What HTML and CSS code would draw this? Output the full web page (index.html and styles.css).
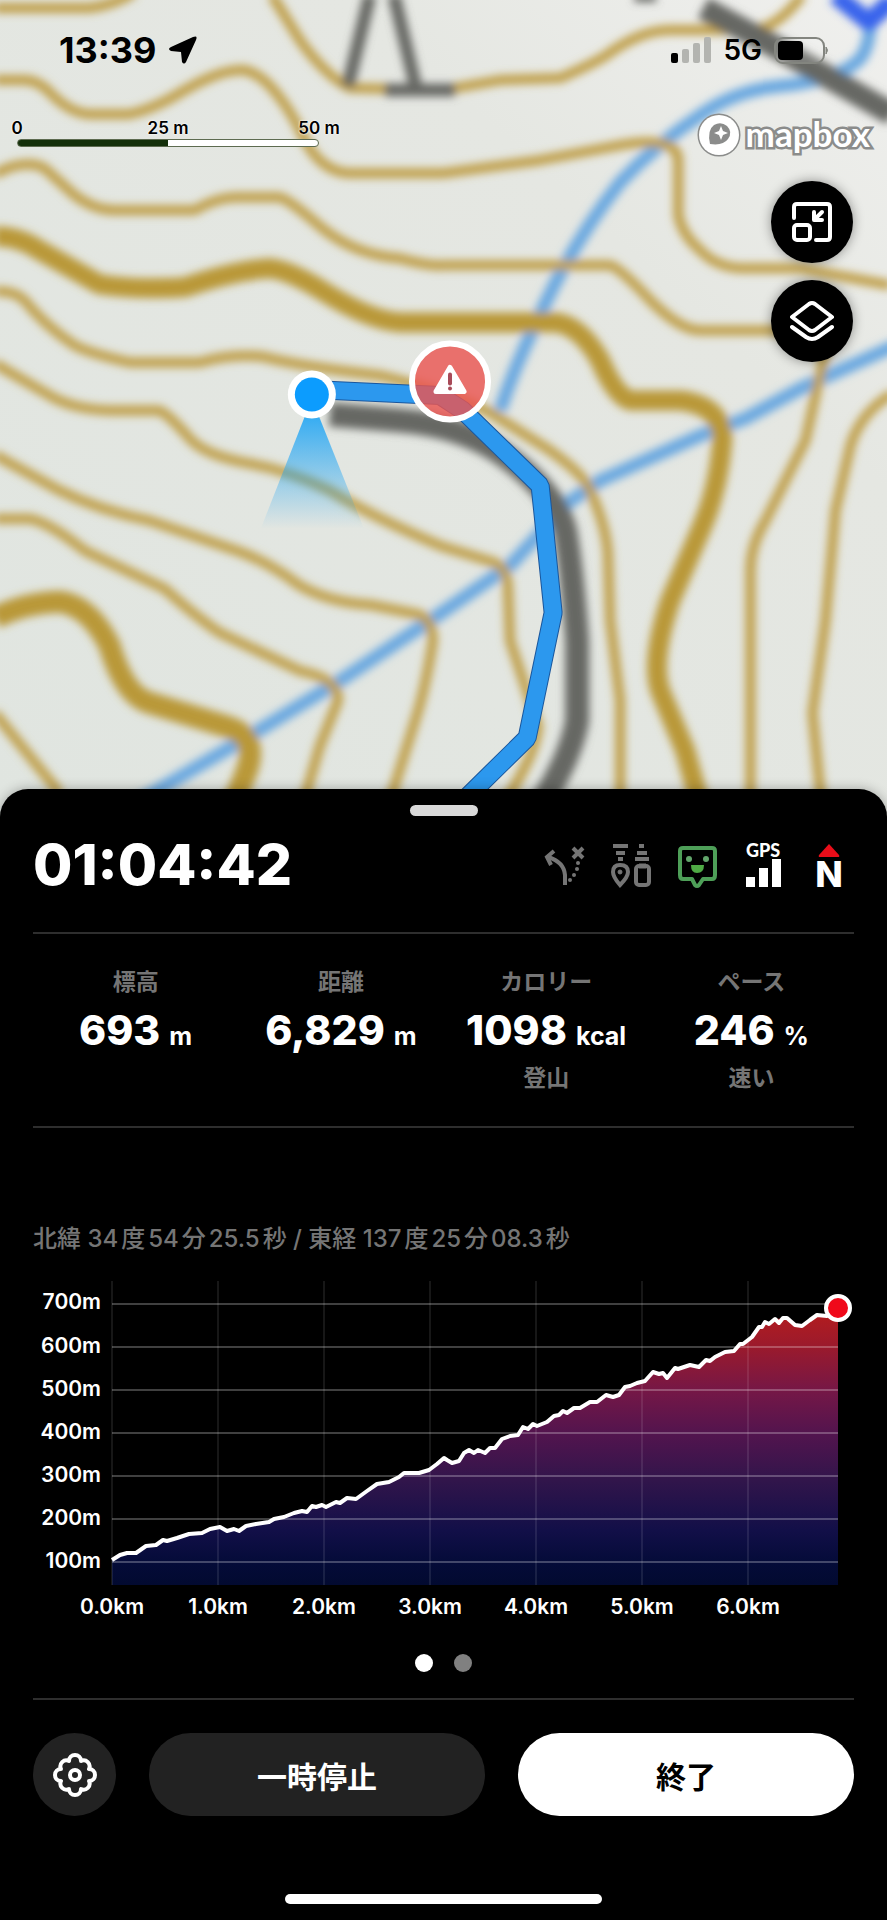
FILE: index.html
```html
<!DOCTYPE html>
<html lang="ja">
<head>
    <meta charset="UTF-8">
    <meta name="viewport" content="width=device-width, initial-scale=1.0">
    <title>活動記録</title>
    <link rel="stylesheet" href="styles.css">
</head>
<body>
    <main class="map">
        <svg class="map-canvas" viewBox="0 0 887 816" preserveAspectRatio="xMidYMin slice" aria-hidden="true">
            <defs>
                <filter id="soft" x="-5%" y="-5%" width="110%" height="110%">
                    <feGaussianBlur stdDeviation="4"/>
                </filter>
                <linearGradient id="cone" x1="0" y1="0" x2="0" y2="1">
                    <stop offset="0" stop-color="#1aa3f5"/>
                    <stop offset="1" stop-color="#1aa3f5" stop-opacity="0"/>
                </linearGradient>
                <linearGradient id="land" x1="0" y1="1" x2="1" y2="0">
                    <stop offset="0" stop-color="#e0e5e0"/>
                    <stop offset="0.7" stop-color="#e5e7e2"/>
                    <stop offset="1" stop-color="#f0f0ee"/>
                </linearGradient>
            </defs>
            <rect width="887" height="816" fill="url(#land)"/>

            <g filter="url(#soft)" fill="none" stroke-linejoin="round">
                <!-- streams -->
                <g stroke="#6aa8e0" stroke-width="13">
                    <path d="M500 410 Q515 365 535 325 Q570 245 620 182 Q655 145 700 115 Q735 90 780 86 Q840 80 860 58 Q870 45 870 15"/>
                    <path d="M120 812 L160 788 L250 735 L340 680 L430 620 L510 565 L568 502 L600 480 L700 435 L745 418 L800 388 L895 345"/>
                </g>
                <path d="M835 -5 L868 22 L892 0" stroke="#3763ec" stroke-width="18"/>
                <!-- contours -->
                <g stroke="#bf9f48" stroke-width="10">
                    <path d="M-5 8 H90 Q115 5 135 -8"/>
                    <path d="M-5 80 H25 Q38 80 50 92 Q70 113 90 114 H130 Q150 110 175 96 Q220 68 245 70 Q262 74 278 95 Q292 112 305 140 Q322 172 350 173 H443 L540 160 L620 145 Q677 135 678 160 V215 Q682 235 700 250 Q715 266 740 268 H800 L890 285"/>
                    <path d="M272 -5 L300 40 Q325 75 350 88 L443 90 L500 80 L560 78 Q590 65 605 56 Q640 30 670 30 H750 Q775 30 802 -5"/>
                    <path d="M-5 174 Q25 158 45 168 L75 195 Q95 210 115 210 H195 Q215 198 235 197 H280 Q290 200 320 226 Q355 255 400 258 Q430 266 443 265 H610 Q620 268 650 300 Q680 330 700 330 H840"/>
                    <path d="M-5 291 Q15 290 25 300 Q45 325 75 345 Q90 353 130 362 H200 Q230 353 262 356 Q300 366 380 375 Q450 392 490 412 L550 450 Q585 475 590 490 Q608 530 608 560 L610 620 L620 700 V812"/>
                    <path d="M-5 363 L45 392 Q70 409 110 410 H160 Q170 415 190 438 Q205 455 250 463 Q290 470 330 490 Q370 515 440 545 L495 562 Q508 568 508 590 L510 640 Q530 700 538 725 Q535 755 505 800"/>
                    <path d="M-5 454 L60 490 Q100 510 150 520 L240 551 Q270 562 300 585 Q330 602 370 604 L415 613 Q432 615 433 640 Q425 690 415 720 L390 800"/>
                    <path d="M-5 518 H30 Q50 522 85 550 L165 588 Q195 615 220 632 L300 670 Q340 678 338 700 L320 745 L304 800"/>
                    <path d="M-5 712 L60 792"/>
                    <path d="M825 350 L805 440 L765 520 Q750 545 750 570 V812"/>
                    <path d="M892 393 Q860 412 850 445 L835 510 L825 620 L812 712 L822 812"/>
                </g>
                <g stroke="#b99838" stroke-width="20">
                    <path d="M-5 236 Q20 236 40 250 L100 284 Q140 290 185 287 Q235 270 270 268 Q290 270 325 292 Q370 320 400 322 H555 Q580 325 600 360 Q615 395 630 400 H680 Q722 405 722 440 Q718 490 700 530 L670 600 Q650 660 660 690 L685 750 L702 812"/>
                    <path d="M-5 617 Q25 602 60 601 Q90 605 110 645 Q125 695 150 702 L225 725 Q262 735 245 775 L232 806" stroke-width="22"/>
                </g>
                <!-- roads -->
                <g stroke="#666763" stroke-width="24">
                    <path d="M330 414 L400 420 Q460 425 500 452 Q555 490 565 530 Q572 570 577 640 V720 Q570 760 535 812"/>
                    <path d="M703 8 L770 44 L892 114" stroke-width="23"/>
                    <path d="M370 -5 L348 86 M394 -5 L416 88 M385 90 H455" stroke-width="13"/>
                    <path d="M634 -2 H656" stroke-width="8"/>
                </g>
            </g>

            <path d="M312 398 L261 528 H364 Z" fill="url(#cone)"/>
            <path d="M312 389 L440 395 L463 410 L540 485 L553 612 L527 737 L466 797" fill="none" stroke="#1a569c" stroke-width="19" stroke-linejoin="bevel"/>
            <path d="M312 389 L440 395 L463 410 L540 485 L553 612 L527 737 L466 797" fill="none" stroke="#2c98ee" stroke-width="17" stroke-linejoin="bevel"/>
            <circle cx="312" cy="394" r="24" fill="#fff"/>
            <circle cx="312" cy="394" r="17" fill="#0c9cfe"/>

            <circle cx="450" cy="381" r="38" fill="#ea5552" fill-opacity="0.82" stroke="#fff" stroke-width="6"/>
            <path d="M450 367 L464 391 H436 Z" fill="#fff" stroke="#fff" stroke-width="5" stroke-linejoin="round"/>
            <path d="M450 374 V383" stroke="#a84a58" stroke-width="4" stroke-linecap="round"/>
            <circle cx="450" cy="388" r="2" fill="#a84a58"/>
        </svg>

        <header class="status-bar">
            <div class="status-time">
                <span>13:39</span>
                <svg width="30" height="30" viewBox="0 0 30 30" aria-hidden="true">
                    <path d="M3 12 L25 2 Q30 0 28 5 L18 27 Q16 30 14 27 L13 17 L3 16 Q-1 14 3 12 Z" fill="#000"/>
                </svg>
            </div>
            <div class="status-signal">
                <svg width="40" height="27" viewBox="0 0 40 27" aria-hidden="true">
                    <rect x="0" y="16" width="7" height="10" rx="2" fill="#000"/>
                    <g fill="#b3b4b0">
                        <rect x="11" y="12" width="7" height="14" rx="2"/>
                        <rect x="22" y="6" width="7" height="20" rx="2"/>
                        <rect x="33" y="0" width="7" height="26" rx="2"/>
                    </g>
                </svg>
                <span>5G</span>
                <svg width="56" height="27" viewBox="0 0 56 27" aria-hidden="true">
                    <rect x="1" y="1" width="49" height="25" rx="8" fill="#fff" fill-opacity="0.15" stroke="#83857f" stroke-width="2"/>
                    <rect x="4" y="4" width="25" height="19" rx="4" fill="#000"/>
                    <path d="M52 10 Q55 13 52 17 Z" fill="#83857f" stroke="#83857f"/>
                </svg>
            </div>
        </header>

        <div class="map-tools">
            <div class="scale">
                <div class="scale-labels">
                    <span>0</span>
                    <span>25 m</span>
                    <span>50 m</span>
                </div>
                <div class="scale-bar"></div>
            </div>
            <div class="map-actions">
                <a class="mapbox" href="#">
                    <svg width="44" height="44" viewBox="0 0 44 44" aria-hidden="true">
                        <circle cx="22" cy="22" r="20" fill="#fff" stroke="#8b8c8b" stroke-width="3"/>
                        <path d="M13 31 Q10 17 17 12 Q24 8 30 13 Q36 19 31 26 Q26 33 13 31 Z" fill="#8b8c8b"/>
                        <path d="M24 13 L26 18 L31 20 L26 22 L24 27 L22 22 L17 20 L22 18 Z" fill="#fff"/>
                    </svg>
                    <span>mapbox</span>
                </a>
                <button class="round-button" type="button" aria-label="縮小表示">
                    <svg width="42" height="42" viewBox="0 0 42 42" fill="none" stroke="#fff" stroke-width="4" stroke-linecap="round" stroke-linejoin="round" aria-hidden="true">
                        <path d="M3 17 V6 Q3 3 6 3 H36 Q39 3 39 6 V36 Q39 39 36 39 H25"/>
                        <rect x="3" y="24" width="16" height="15" rx="3"/>
                        <path d="M31 11 L24 18 M23 11 V19 H31"/>
                    </svg>
                </button>
                <button class="round-button" type="button" aria-label="レイヤー">
                    <svg width="46" height="42" viewBox="0 0 46 42" fill="none" stroke="#fff" stroke-width="4" stroke-linecap="round" stroke-linejoin="round" aria-hidden="true">
                        <path d="M20 4 Q23 2 26 4 L43 17 L26 30 Q23 32 20 30 L3 17 Z"/>
                        <path d="M3 27 L17 37 Q23 41 29 37 L43 27"/>
                    </svg>
                </button>
            </div>
        </div>
    </main>

    <section class="sheet">
        <div class="handle"></div>

        <div class="timer-row">
            <div class="timer">01:04:42</div>
            <div class="indicators">
                <svg viewBox="0 0 44 44" fill="none" stroke="#757575" stroke-width="4" aria-hidden="true">
                    <path d="M22 42 V32 Q21 19 5 14"/>
                    <path d="M11 8 L4 14 L8 22" />
                    <path d="M30 5 L40 15 M40 5 L30 15"/>
                    <g fill="#757575" stroke="none">
                        <circle cx="35" cy="20" r="2"/>
                        <circle cx="34" cy="26" r="2"/>
                        <circle cx="31" cy="32" r="2"/>
                        <circle cx="27" cy="37" r="2"/>
                    </g>
                </svg>
                <svg viewBox="0 0 44 44" fill="none" stroke="#757575" stroke-width="4" aria-hidden="true">
                    <path d="M4 3 H19 M7 10 H16 M9 16 H14 M30 3 H35 M28 10 H38 M26 16 H40"/>
                    <path d="M11 42 Q4 34 4 29 Q4 22 11 22 Q19 22 19 29 Q19 34 11 42 Z"/>
                    <circle cx="11" cy="29" r="2" fill="#757575" stroke-width="1"/>
                    <rect x="27" y="23" width="13" height="19" rx="3"/>
                    <path d="M30 23 H37" stroke-width="5"/>
                </svg>
                <svg viewBox="0 0 44 44" aria-hidden="true">
                    <path d="M8 5 H37 Q40 5 40 8 V32 Q40 36 37 36 H28 L24 42 Q22 44 20 42 L17 36 H8 Q5 36 5 32 V8 Q5 5 8 5 Z" fill="none" stroke="#4e9f58" stroke-width="4" stroke-linejoin="round"/>
                    <circle cx="14" cy="16" r="3" fill="#62a66b"/>
                    <circle cx="31" cy="16" r="3" fill="#62a66b"/>
                    <path d="M16 22 H29 Q29 30 22 30 Q16 30 16 22 Z" fill="#4fab45"/>
                </svg>
                <svg viewBox="0 0 44 44" fill="#fff" aria-hidden="true">
                    <text class="gps-text" x="22" y="14" text-anchor="middle">GPS</text>
                    <rect x="5" y="34" width="9" height="10"/>
                    <rect x="18" y="25" width="9" height="19"/>
                    <rect x="31" y="16" width="9" height="28"/>
                </svg>
                <svg viewBox="0 0 44 44" aria-hidden="true">
                    <path d="M22 1 L32 12 Q33 14 31 14 H13 Q11 14 12 12 Z" fill="#ea0d19"/>
                    <text class="north-text" x="22" y="44" text-anchor="middle">N</text>
                </svg>
            </div>
        </div>

        <dl class="stats">
            <div class="stat">
                <dt>標高</dt>
                <dd class="value">693<small>m</small></dd>
            </div>
            <div class="stat">
                <dt>距離</dt>
                <dd class="value">6,829<small>m</small></dd>
            </div>
            <div class="stat">
                <dt>カロリー</dt>
                <dd class="value">1098<small>kcal</small></dd>
                <dd class="note">登山</dd>
            </div>
            <div class="stat">
                <dt>ペース</dt>
                <dd class="value">246<small>%</small></dd>
                <dd class="note">速い</dd>
            </div>
        </dl>

        <p class="coords">北緯 34度54分25.5秒 / 東経 137度25分08.3秒</p>

        <svg class="chart" viewBox="0 0 821 344" role="img" aria-label="標高グラフ">
            <defs>
                <linearGradient id="elevation" gradientUnits="userSpaceOnUse" x1="0" y1="30" x2="0" y2="304">
                    <stop offset="0" stop-color="#b41c1e"/>
                    <stop offset="0.12" stop-color="#9d1a2b"/>
                    <stop offset="0.3" stop-color="#731747"/>
                    <stop offset="0.45" stop-color="#52144e"/>
                    <stop offset="0.62" stop-color="#31154b"/>
                    <stop offset="0.8" stop-color="#120f48"/>
                    <stop offset="0.92" stop-color="#040b38"/>
                    <stop offset="1" stop-color="#020a30"/>
                </linearGradient>
            </defs>
            <g transform="translate(79 4)">
                <path fill="url(#elevation)" d="M0 279 L8 274 L15 272 L24 272 L34 265 L44 264 L51 259 L55 260 L77 253 L90 252 L98 248 L108 246 L115 250 L122 248 L127 250 L134 245 L157 241 L172 236 L190 230 L195 231 L200 225 L214 226 L224 221 L235 217 L244 218 L255 210 L265 203 L277 201 L292 192 L307 192 L317 189 L332 177 L340 182 L347 180 L357 169 L373 172 L378 167 L383 167 L390 158 L406 154 L411 146 L425 145 L435 141 L451 130 L468 127 L478 121 L485 121 L494 114 L507 114 L513 106 L533 100 L541 91 L551 92 L555 97 L563 87 L578 84 L587 86 L594 79 L613 71 L622 70 L640 56 L647 46 L663 38 L675 37 L683 44 L690 45 L705 34 L715 35 L726 27 V304 H0 Z"/>
                <path class="grid-km" d="M0 0 V304 M106 0 V304 M212 0 V304 M318 0 V304 M424 0 V304 M530 0 V304 M636 0 V304"/>
                <path class="grid-m" d="M0 23 H726 M0 66 H726 M0 109 H726 M0 152 H726 M0 195 H726 M0 238 H726 M0 281 H726"/>
                <path class="profile" d="M0 279 L8 274 L15 272 L24 272 L34 265 L44 264 L51 259 L55 260 L65 257 L77 253 L90 252 L98 248 L108 246 L115 250 L122 248 L127 250 L134 245 L144 243 L157 241 L162 238 L172 236 L182 232 L190 230 L195 231 L200 225 L204 226 L210 224 L214 226 L224 221 L228 222 L235 217 L244 218 L255 210 L265 203 L277 201 L287 196 L292 192 L307 192 L317 189 L325 183 L332 177 L335 179 L340 182 L347 180 L352 172 L357 169 L362 172 L366 169 L373 172 L378 167 L383 167 L390 158 L398 155 L406 154 L411 146 L416 148 L421 143 L425 145 L435 141 L442 135 L447 134 L451 130 L455 132 L462 127 L468 127 L478 121 L485 121 L494 114 L501 116 L507 114 L513 106 L518 105 L525 102 L533 100 L541 91 L547 93 L551 92 L555 97 L563 87 L566 88 L578 84 L587 86 L594 79 L598 80 L603 76 L613 71 L622 70 L628 63 L631 63 L640 56 L647 46 L650 46 L653 41 L657 43 L663 38 L667 42 L671 37 L675 37 L683 44 L690 45 L698 39 L705 34 L715 35 L726 27"/>
                <circle cx="726" cy="27" r="12" fill="#f0091a" stroke="#fff" stroke-width="4"/>
            </g>
            <g class="axis" text-anchor="end">
                <text x="68" y="32">700m</text>
                <text x="68" y="76">600m</text>
                <text x="68" y="119">500m</text>
                <text x="68" y="162">400m</text>
                <text x="68" y="205">300m</text>
                <text x="68" y="248">200m</text>
                <text x="68" y="291">100m</text>
            </g>
            <g class="axis" text-anchor="middle">
                <text x="79" y="337">0.0km</text>
                <text x="185" y="337">1.0km</text>
                <text x="291" y="337">2.0km</text>
                <text x="397" y="337">3.0km</text>
                <text x="503" y="337">4.0km</text>
                <text x="609" y="337">5.0km</text>
                <text x="715" y="337">6.0km</text>
            </g>
        </svg>

        <div class="pager">
            <span class="dot active"></span>
            <span class="dot"></span>
        </div>

        <div class="controls">
            <button class="settings" type="button" aria-label="設定">
                <svg width="44" height="44" viewBox="0 0 44 44" fill="none" stroke="#fff" stroke-width="4" stroke-linejoin="round" aria-hidden="true">
                    <path d="M36 16 A6 6 0 0 1 36 28 A6 6 0 0 1 28 36 A6 6 0 0 1 16 36 A6 6 0 0 1 8 28 A6 6 0 0 1 8 16 A6 6 0 0 1 16 8 A6 6 0 0 1 28 8 A6 6 0 0 1 36 16 Z"/>
                    <circle cx="22" cy="22" r="5"/>
                </svg>
            </button>
            <button class="pause" type="button">一時停止</button>
            <button class="finish" type="button">終了</button>
        </div>

        <div class="home-indicator"></div>
    </section>
</body>
</html>
```

FILE: styles.css
```css
* {
    box-sizing: border-box;
}
body {
    margin: 0;
    min-height: 100vh;
    display: flex;
    flex-direction: column;
    background: #000;
    color: #fff;
    font-family: Inter, "Noto Sans CJK JP", sans-serif;
}
button {
    border: none;
    padding: 0;
    font-family: inherit;
    cursor: pointer;
}
svg {
    display: block;
}

/* map */
.map {
    position: relative;
    flex: 1;
    min-height: 480px;
    margin-bottom: -28px;
    overflow: hidden;
    color: #000;
}
.map-canvas {
    position: absolute;
    inset: 0;
    width: 100%;
    height: 100%;
}
.status-bar {
    position: relative;
    display: flex;
    justify-content: space-between;
    align-items: center;
    padding: 28px 57px 0 59px;
}
.status-time, .status-signal {
    display: flex;
    align-items: center;
    gap: 12px;
}
.status-time {
    font-size: 36px;
    line-height: 44px;
    font-weight: 700;
}
.status-signal {
    font-size: 28px;
    font-weight: 600;
}
.map-tools {
    position: relative;
    display: flex;
    justify-content: space-between;
    align-items: flex-start;
    padding: 41px 17px 0;
}
.scale {
    width: 302px;
    padding-top: 4px;
}
.scale-labels {
    display: flex;
    justify-content: space-between;
    font-size: 17px;
    line-height: 22px;
    font-weight: 600;
    text-shadow: 0 0 2px #fff, 0 0 2px #fff;
}
.scale-labels span {
    width: 0;
    display: flex;
    justify-content: center;
    white-space: nowrap;
}
.scale-bar {
    height: 8px;
    border: 1px solid #5d6b50;
    border-radius: 4px;
    background: linear-gradient(to right, #14300a 50%, #fff 50%);
}
.map-actions {
    display: flex;
    flex-direction: column;
    align-items: flex-end;
    gap: 17px;
}
.mapbox {
    display: flex;
    align-items: center;
    gap: 5px;
    margin-bottom: 7px;
    color: #fff;
    font-family: Lato, sans-serif;
    font-size: 35px;
    line-height: 40px;
    font-weight: 700;
    text-decoration: none;
    -webkit-text-stroke: 5px #8b8c8b;
    paint-order: stroke fill;
}
.mapbox span {
    padding-bottom: 4px;
}
.round-button {
    width: 82px;
    height: 82px;
    margin-right: 17px;
    display: flex;
    align-items: center;
    justify-content: center;
    border-radius: 50%;
    background: #000;
    box-shadow: 0 0 12px rgba(0,0,0,0.4);
}

/* bottom sheet */
.sheet {
    position: relative;
    padding: 16px 33px;
    border-radius: 28px 28px 0 0;
    background: #000;
    box-shadow: 0 0 12px rgba(0,0,0,0.3);
}
.handle {
    width: 68px;
    height: 11px;
    margin: 0 auto;
    border-radius: 6px;
    background: #d9d9d9;
}
.timer-row {
    display: flex;
    justify-content: space-between;
    align-items: center;
    padding: 17px 3px 35px 0;
    border-bottom: 2px solid #2e2e2e;
}
.timer {
    font-size: 57px;
    line-height: 64px;
    font-weight: 800;
}
.indicators {
    display: flex;
    gap: 22px;
}
.indicators svg {
    width: 44px;
    height: 44px;
    overflow: visible;
}
.gps-text {
    font-family: Lato, sans-serif;
    font-size: 18px;
    font-weight: 900;
}
.north-text {
    fill: #fff;
    font-size: 36px;
    font-weight: 800;
}
.stats {
    display: grid;
    grid-template-columns: repeat(4, 1fr);
    margin: 0;
    padding: 34px 0;
    border-bottom: 2px solid #2e2e2e;
    text-align: center;
}
.stat {
    display: flex;
    flex-direction: column;
    gap: 10px;
    white-space: nowrap;
}
.stat dt, .stat .note {
    margin: 0;
    color: #757575;
    font-size: 23px;
    line-height: 28px;
    font-weight: 600;
}
.stat .value {
    display: flex;
    justify-content: center;
    align-items: baseline;
    gap: 9px;
    height: 48px;
    margin: 0;
    font-size: 41px;
    line-height: 48px;
    font-weight: 800;
}
.stat small {
    font-size: 25px;
    font-weight: 700;
}
.coords {
    margin: 97px 0 24px;
    color: #757575;
    font-size: 24px;
    line-height: 28px;
    font-weight: 500;
    text-autospace: normal;
}
.chart {
    width: 100%;
    overflow: visible;
}
.grid-km {
    stroke: rgba(255,255,255,0.18);
}
.grid-m {
    stroke: rgba(255,255,255,0.5);
}
.profile {
    fill: none;
    stroke: #fff;
    stroke-width: 4px;
    stroke-linejoin: round;
}
.axis {
    fill: #fff;
    font-size: 21px;
    font-weight: 600;
}
.pager {
    display: flex;
    justify-content: center;
    gap: 21px;
    padding: 33px 0 26px;
    border-bottom: 2px solid #2e2e2e;
}
.dot {
    width: 18px;
    height: 18px;
    border-radius: 50%;
    background: #808080;
}
.dot.active {
    background: #fff;
}
.controls {
    display: flex;
    gap: 33px;
    padding: 33px 0 78px;
}
.controls button {
    height: 83px;
    border-radius: 42px;
    background: #222;
    color: #fff;
    font-size: 30px;
    font-weight: 700;
}
.controls .settings {
    width: 83px;
    display: flex;
    align-items: center;
    justify-content: center;
}
.controls .pause, .controls .finish {
    flex: 1;
}
.controls .finish {
    background: #fff;
    color: #000;
}
.home-indicator {
    width: 317px;
    max-width: 50%;
    height: 10px;
    margin: 0 auto;
    border-radius: 5px;
    background: #fff;
}
```
